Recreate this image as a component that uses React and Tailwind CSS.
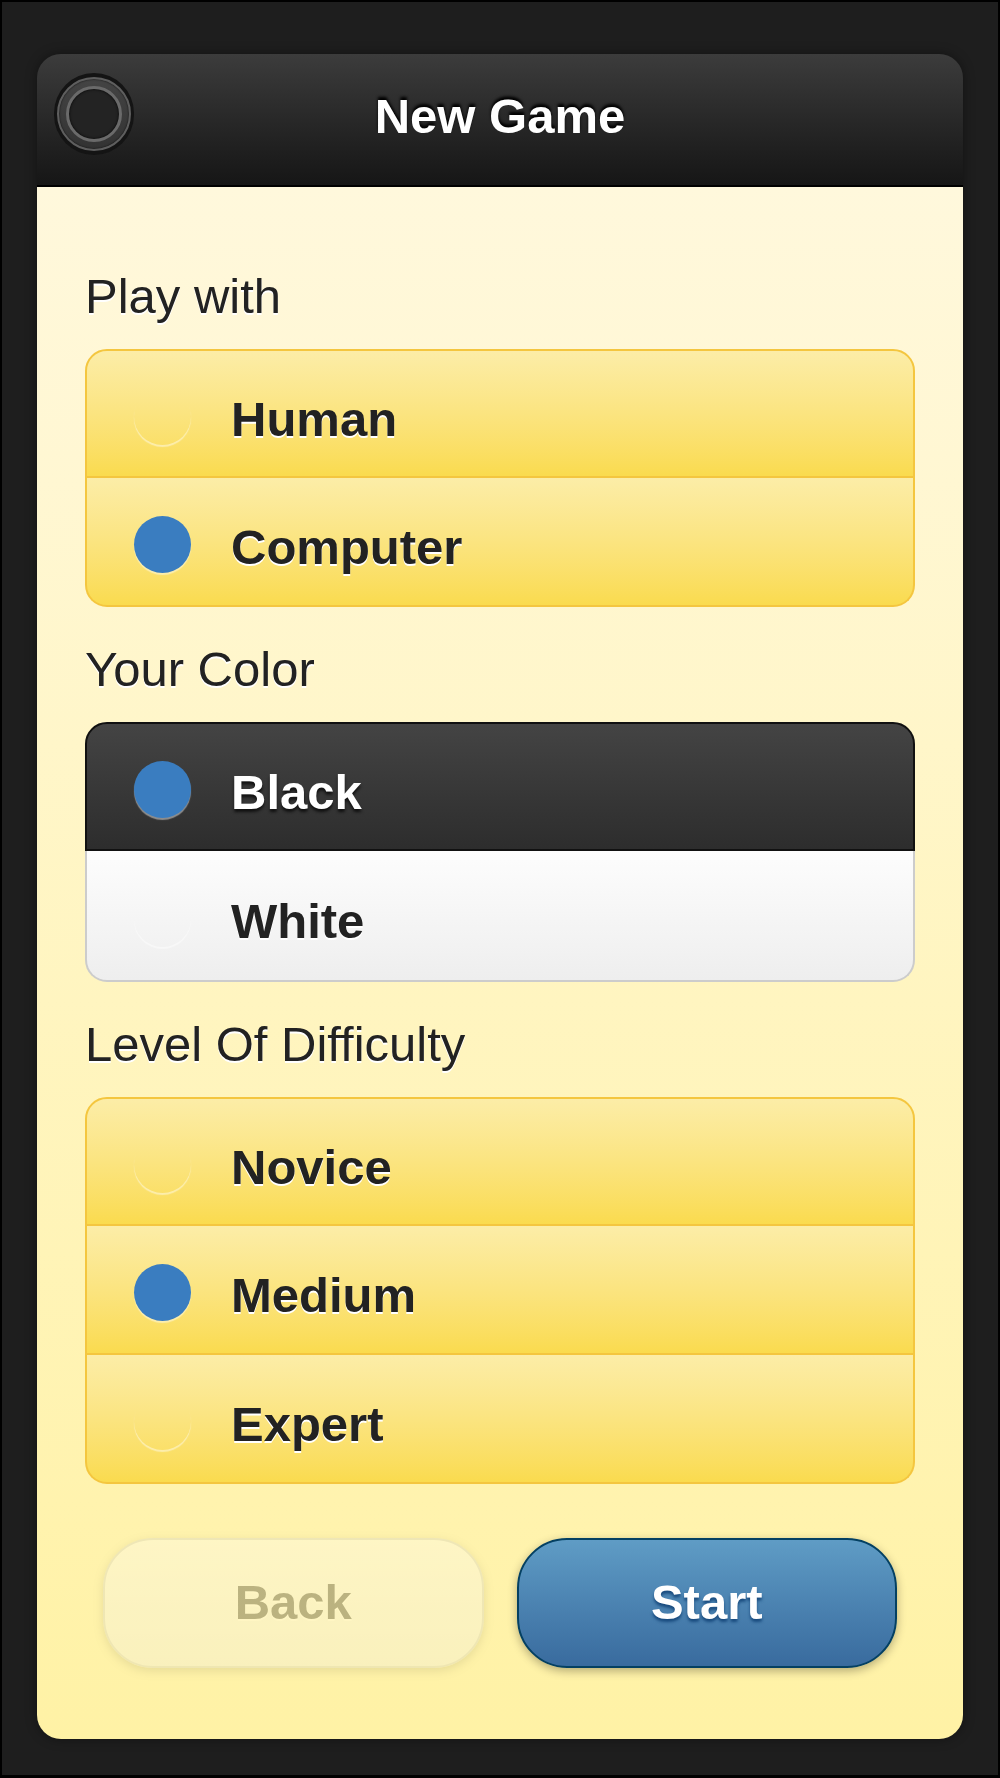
import React from "react";

const FONT = "font-['Liberation_Sans',Arial,Helvetica,sans-serif]";

function Radio({ checked }) {
  return (
    <span
      className={
        "w-[57px] h-[57px] rounded-full shrink-0 shadow-[0_2px_1px_rgba(255,255,255,0.45)] " +
        (checked ? "bg-[#3a7dc0]" : "bg-transparent")
      }
    />
  );
}

function YellowGroup({ options, selected }) {
  return (
    <div className="flex flex-col">
      {options.map((o, i) => {
        const first = i === 0;
        const last = i === options.length - 1;
        return (
          <div
            key={o}
            className={
              "flex items-center h-[129px] pt-[5px] pl-[47px] gap-[40px] border-x-2 border-b-2 border-[#f4c63f] bg-gradient-to-b from-[#fceda7] to-[#fadb4e] " +
              (first ? "border-t-2 rounded-t-[22px] " : "") +
              (last ? "rounded-b-[22px]" : "")
            }
          >
            <Radio checked={o === selected} />
            <span className="mt-[7px] text-[49px] font-bold text-[#222] [text-shadow:0_2px_0_#fff]">
              {o}
            </span>
          </div>
        );
      })}
    </div>
  );
}

function Label({ children, first }) {
  return (
    <div
      className={
        "text-[49px] leading-[62px] text-[#222] [text-shadow:0_2px_0_#fff] mb-[22px] " +
        (first ? "" : "mt-[31px]")
      }
    >
      {children}
    </div>
  );
}

export default function App() {
  return (
    <div
      className={`${FONT} h-[1778px] bg-[#1e1e1e] border-t-2 border-b-[3px] border-x-2 border-black pt-[52px] px-[35px]`}
    >
      <div className="rounded-[24px] overflow-hidden shadow-[0_0_12px_rgba(0,0,0,0.4)]">
        {/* header */}
        <div className="relative h-[133px] flex items-center justify-center pb-[6px] bg-gradient-to-b from-[#3c3c3c] to-[#161616] border-b-2 border-black">
          <div className="absolute left-[17px] top-[19px] w-[80px] h-[82px] rounded-full bg-[#141414] flex items-center justify-center">
            <div className="w-[74px] h-[74px] rounded-full bg-gradient-to-b from-[#444] to-[#333] border-2 border-[#5e5e5e] flex items-center justify-center shadow-[inset_0_0_2px_rgba(0,0,0,0.8)]">
              <div className="w-[56px] h-[56px] rounded-full bg-[#232323] border-[3px] border-[#6a6a6a] shadow-[inset_0_0_3px_rgba(0,0,0,0.9)]" />
            </div>
          </div>
          <h1 className="text-white text-[49px] font-bold [text-shadow:0_-3px_3px_#000]">
            New Game
          </h1>
        </div>

        {/* content */}
        <div className="bg-gradient-to-b from-[#fff8dc] to-[#fff2a5] px-[48px] pt-[78px] pb-[71px]">
          <Label first>Play with</Label>
          <YellowGroup options={["Human", "Computer"]} selected="Computer" />

          <Label>Your Color</Label>
          <div className="flex flex-col">
            <div className="flex items-center h-[129px] pt-[5px] pl-[47px] gap-[40px] border-2 border-[#111] rounded-t-[22px] bg-gradient-to-b from-[#444] to-[#2d2d2d]">
              <Radio checked />
              <span className="mt-[7px] text-[49px] font-bold text-white [text-shadow:0_3px_3px_#111]">
                Black
              </span>
            </div>
            <div className="flex items-center h-[131px] pt-[5px] pl-[47px] gap-[40px] border-x-2 border-b-2 border-[#ccc] rounded-b-[22px] bg-gradient-to-b from-[#fdfdfd] to-[#eeeeee]">
              <Radio />
              <span className="mt-[7px] text-[49px] font-bold text-[#222] [text-shadow:0_2px_0_#fff]">
                White
              </span>
            </div>
          </div>

          <Label>Level Of Difficulty</Label>
          <YellowGroup options={["Novice", "Medium", "Expert"]} selected="Medium" />

          {/* actions */}
          <div className="grid grid-cols-2 gap-[33px] px-[18px] mt-[54px]">
            <button className="h-[130px] rounded-[50px] border-2 border-[#ccc] bg-gradient-to-b from-[#fdfdfd] to-[#eeeeee] text-[49px] font-bold text-[#222] [text-shadow:0_2px_0_#fff] opacity-30 shadow-[0_3px_10px_rgba(0,0,0,0.3)]">
              Back
            </button>
            <button className="h-[130px] rounded-[50px] border-2 border-[#044062] bg-gradient-to-b from-[#5f9cc5] to-[#396b9e] text-[49px] font-bold text-white [text-shadow:0_3px_3px_#194b7e] shadow-[0_3px_10px_rgba(0,0,0,0.3)]">
              Start
            </button>
          </div>
        </div>
      </div>
    </div>
  );
}
